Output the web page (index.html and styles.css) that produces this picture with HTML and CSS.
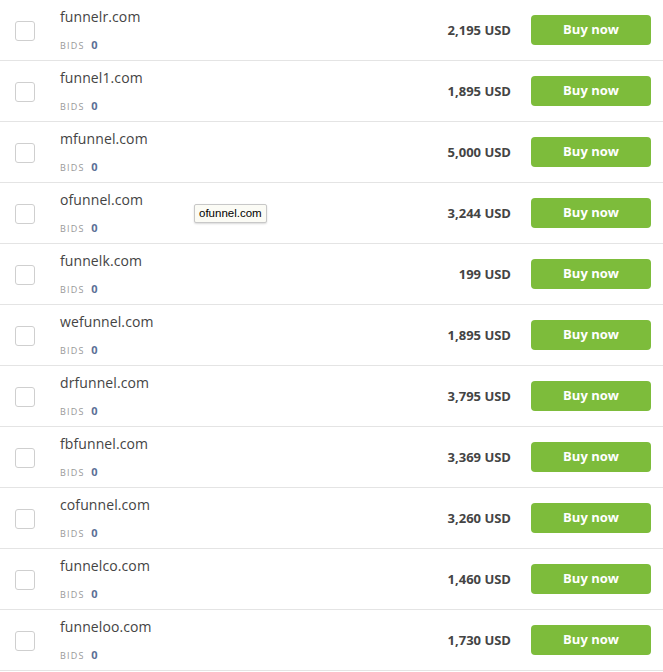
FILE: index.html
```html
<!DOCTYPE html>
<html>
<head>
<meta charset="utf-8">
<link rel="stylesheet" href="styles.css">
</head>
<body>
<div class="list">
  <div class="row"><span class="check"></span><div class="info"><div class="domain">funnelr.com</div><div class="bids">BIDS <b>0</b></div></div><div class="price">2,195 USD</div><button class="buy">Buy now</button></div>
  <div class="row"><span class="check"></span><div class="info"><div class="domain">funnel1.com</div><div class="bids">BIDS <b>0</b></div></div><div class="price">1,895 USD</div><button class="buy">Buy now</button></div>
  <div class="row"><span class="check"></span><div class="info"><div class="domain">mfunnel.com</div><div class="bids">BIDS <b>0</b></div></div><div class="price">5,000 USD</div><button class="buy">Buy now</button></div>
  <div class="row"><span class="check"></span><div class="info"><div class="domain">ofunnel.com</div><div class="bids">BIDS <b>0</b></div><span class="tooltip">ofunnel.com</span></div><div class="price">3,244 USD</div><button class="buy">Buy now</button></div>
  <div class="row"><span class="check"></span><div class="info"><div class="domain">funnelk.com</div><div class="bids">BIDS <b>0</b></div></div><div class="price">199 USD</div><button class="buy">Buy now</button></div>
  <div class="row"><span class="check"></span><div class="info"><div class="domain">wefunnel.com</div><div class="bids">BIDS <b>0</b></div></div><div class="price">1,895 USD</div><button class="buy">Buy now</button></div>
  <div class="row"><span class="check"></span><div class="info"><div class="domain">drfunnel.com</div><div class="bids">BIDS <b>0</b></div></div><div class="price">3,795 USD</div><button class="buy">Buy now</button></div>
  <div class="row"><span class="check"></span><div class="info"><div class="domain">fbfunnel.com</div><div class="bids">BIDS <b>0</b></div></div><div class="price">3,369 USD</div><button class="buy">Buy now</button></div>
  <div class="row"><span class="check"></span><div class="info"><div class="domain">cofunnel.com</div><div class="bids">BIDS <b>0</b></div></div><div class="price">3,260 USD</div><button class="buy">Buy now</button></div>
  <div class="row"><span class="check"></span><div class="info"><div class="domain">funnelco.com</div><div class="bids">BIDS <b>0</b></div></div><div class="price">1,460 USD</div><button class="buy">Buy now</button></div>
  <div class="row"><span class="check"></span><div class="info"><div class="domain">funneloo.com</div><div class="bids">BIDS <b>0</b></div></div><div class="price">1,730 USD</div><button class="buy">Buy now</button></div>
</div>
</body>
</html>
```
FILE: styles.css
```css
* { box-sizing: border-box; }
body {
  margin: 0;
  background: #fff;
  font-family: "Open Sans", "Liberation Sans", sans-serif;
  color: #444;
}
.list { width: 663px; }
.row {
  display: flex;
  align-items: center;
  height: 61px;
  border-bottom: 1px solid #e4e4e4;
  padding: 0 12px 0 15px;
}
.check {
  width: 20px;
  height: 20px;
  border: 1px solid #cfcfcf;
  border-radius: 3px;
  background: #fff;
  flex: none;
  margin-top: 1px;
}
.info {
  position: relative;
  flex: 1;
  margin-left: 25px;
  align-self: stretch;
  padding-top: 7px;
}
.domain {
  font-size: 14px;
  letter-spacing: 0.1px;
  line-height: 20px;
  color: #444;
}
.bids {
  margin-top: 12px;
  font-size: 9px;
  letter-spacing: 1.2px;
  color: #999;
  line-height: 12px;
}
.bids b {
  color: #5b6f96;
  font-size: 11px;
  font-weight: 700;
  letter-spacing: 0;
  margin-left: 3px;
}
.price {
  font-size: 13px;
  font-weight: 700;
  color: #444;
  margin-right: 20px;
  margin-top: -1px;
}
.buy {
  width: 120px;
  height: 30px;
  border: none;
  border-radius: 4px;
  background: #7dbc3b;
  color: #fff;
  font-family: "Open Sans", "Liberation Sans", sans-serif;
  font-size: 13px;
  font-weight: 700;
  padding: 0 0 2px;
  margin-top: -1px;
}
.tooltip {
  position: absolute;
  left: 134px;
  top: 21px;
  padding: 2px 4px 3px;
  background: #fbfbf5;
  border: 1px solid #c8c8c8;
  border-radius: 2px;
  box-shadow: 0 1px 2px rgba(0,0,0,0.15);
  font-family: "Liberation Sans", Arial, sans-serif;
  font-size: 11.5px;
  color: #000;
  white-space: nowrap;
}
```
